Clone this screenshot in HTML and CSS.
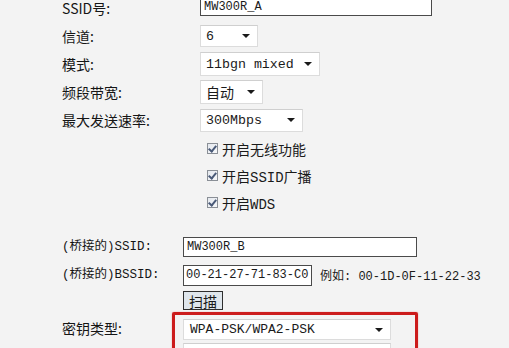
FILE: index.html
```html
<!DOCTYPE html>
<html lang="zh-CN">
<head>
  <meta charset="UTF-8">
  <title>无线设置</title>
  <link rel="stylesheet" href="styles.css">
</head>
<body>
  <div class="form">
    <div class="row first">
      <span class="label">SSID号:</span>
      <div class="text-input ssid">MW300R_A</div>
    </div>
    <div class="row">
      <span class="label">信道:</span>
      <div class="select channel"><span>6</span></div>
    </div>
    <div class="row">
      <span class="label">模式:</span>
      <div class="select mode"><span>11bgn mixed</span></div>
    </div>
    <div class="row">
      <span class="label">频段带宽:</span>
      <div class="select band"><span>自动</span></div>
    </div>
    <div class="row">
      <span class="label">最大发送速率:</span>
      <div class="select speed"><span>300Mbps</span></div>
    </div>

    <div class="checks">
      <label class="check"><span class="box"></span>开启无线功能</label>
      <label class="check"><span class="box"></span>开启SSID广播</label>
      <label class="check"><span class="box"></span>开启WDS</label>
    </div>

    <!-- WDS bridge settings -->
    <div class="bridge">
      <div class="row">
        <span class="label small">(桥接的)SSID:</span>
        <div class="text-input bridge-ssid">MW300R_B</div>
      </div>
      <div class="row">
        <span class="label small">(桥接的)BSSID:</span>
        <div class="text-input bssid">00-21-27-71-83-C0</div>
        <span class="hint">例如: 00-1D-0F-11-22-33</span>
      </div>
      <div class="row short">
        <span class="label"></span>
        <button class="scan">扫描</button>
      </div>
      <div class="row key">
        <span class="label">密钥类型:</span>
        <div class="highlight">
          <div class="select keytype"><span>WPA-PSK/WPA2-PSK</span></div>
          <div class="select next"></div>
        </div>
      </div>
    </div>
  </div>
</body>
</html>
```

FILE: styles.css
```css
body {
  margin: 0;
  background: #f3f3f3;
  color: #1a1a1a;
  font-family: "Liberation Mono", "Noto Sans CJK SC", monospace;
  overflow: hidden;
}

.form {
  padding-left: 62px;
}

.row {
  display: flex;
  align-items: center;
  height: 28px;
}

.row.first {
  height: 22px;
  align-items: flex-start;
}

.row.first .text-input {
  margin-top: -3px;
}

.label {
  width: 138px;
  flex-shrink: 0;
  font-size: 14px;
  line-height: 16px;
  font-family: "Noto Sans CJK SC", monospace;
  color: #151515;
}

.bridge .label {
  width: 121px;
}

.label.small {
  font-size: 12.5px;
  font-family: "Liberation Mono", "Noto Sans CJK SC", monospace;
}

.text-input {
  box-sizing: border-box;
  background: #fff;
  border: 1px solid #4a4a4a;
  font-size: 12px;
  padding: 0 3px;
  display: flex;
  align-items: center;
  white-space: nowrap;
  overflow: hidden;
}

.ssid { width: 232px; height: 19px; }
.bridge-ssid { width: 234px; height: 20px; }
.bssid { width: 129px; height: 21px; padding: 0 2px; }

.hint {
  margin-left: 8px;
  font-size: 12px;
  white-space: nowrap;
}

.select {
  box-sizing: border-box;
  display: flex;
  align-items: center;
  justify-content: space-between;
  background: #fff;
  border: 1px solid #dcdcdc;
  border-top-color: #cfcfcf;
  font-size: 13.3px;
  padding: 0 7px 0 5px;
  white-space: nowrap;
}

.select::after {
  content: "";
  border-left: 4px solid transparent;
  border-right: 4px solid transparent;
  border-top: 4px solid #1a1a1a;
}

.select span {
  font-family: "Liberation Mono", "Noto Sans CJK SC", monospace;
}

.channel { width: 58px; height: 22px; }
.mode { width: 120px; height: 24px; }
.band { width: 63px; height: 24px; font-size: 14px; }
.speed { width: 103px; height: 23px; }
.keytype { width: 208px; height: 21px; font-size: 13px; padding-left: 6px; }
.next { width: 208px; height: 21px; margin-top: 3px; }
.next::after { display: none; }

.checks {
  padding-left: 145px;
  padding-top: 1px;
}

.check {
  display: flex;
  align-items: center;
  height: 27px;
  font-size: 14px;
  font-family: "Liberation Mono", "Noto Sans CJK SC", monospace;
}

.box {
  width: 9px;
  height: 9px;
  border: 1px solid #8a8f96;
  background: linear-gradient(135deg, #e4e8ee, #f7f8fa);
  margin-right: 4px;
  position: relative;
}

.box::after {
  content: "";
  position: absolute;
  left: 2px;
  top: 0px;
  width: 3px;
  height: 6px;
  border-right: 2px solid #4a5a78;
  border-bottom: 2px solid #4a5a78;
  transform: rotate(40deg);
}

.bridge {
  margin-top: 17px;
}

.row.short {
  height: 23px;
}

.scan {
  font-family: "Noto Sans CJK SC", sans-serif;
  font-size: 14px;
  line-height: 16px;
  padding: 0 5px;
  height: 19px;
  background: #dfe6ec;
  border: 1px solid #2e2e2e;
  color: #1a1a1a;
  border-radius: 0;
}

.row.key {
  align-items: flex-start;
  height: auto;
}

.row.key .label {
  padding-top: 8px;
}

.highlight {
  margin-left: -11px;
  width: 246px;
  box-sizing: border-box;
  border: 3px solid #cc1c1c;
  border-radius: 2px;
  box-shadow: 0 0 1px #d44;
  padding: 4px 8px;
}
```
